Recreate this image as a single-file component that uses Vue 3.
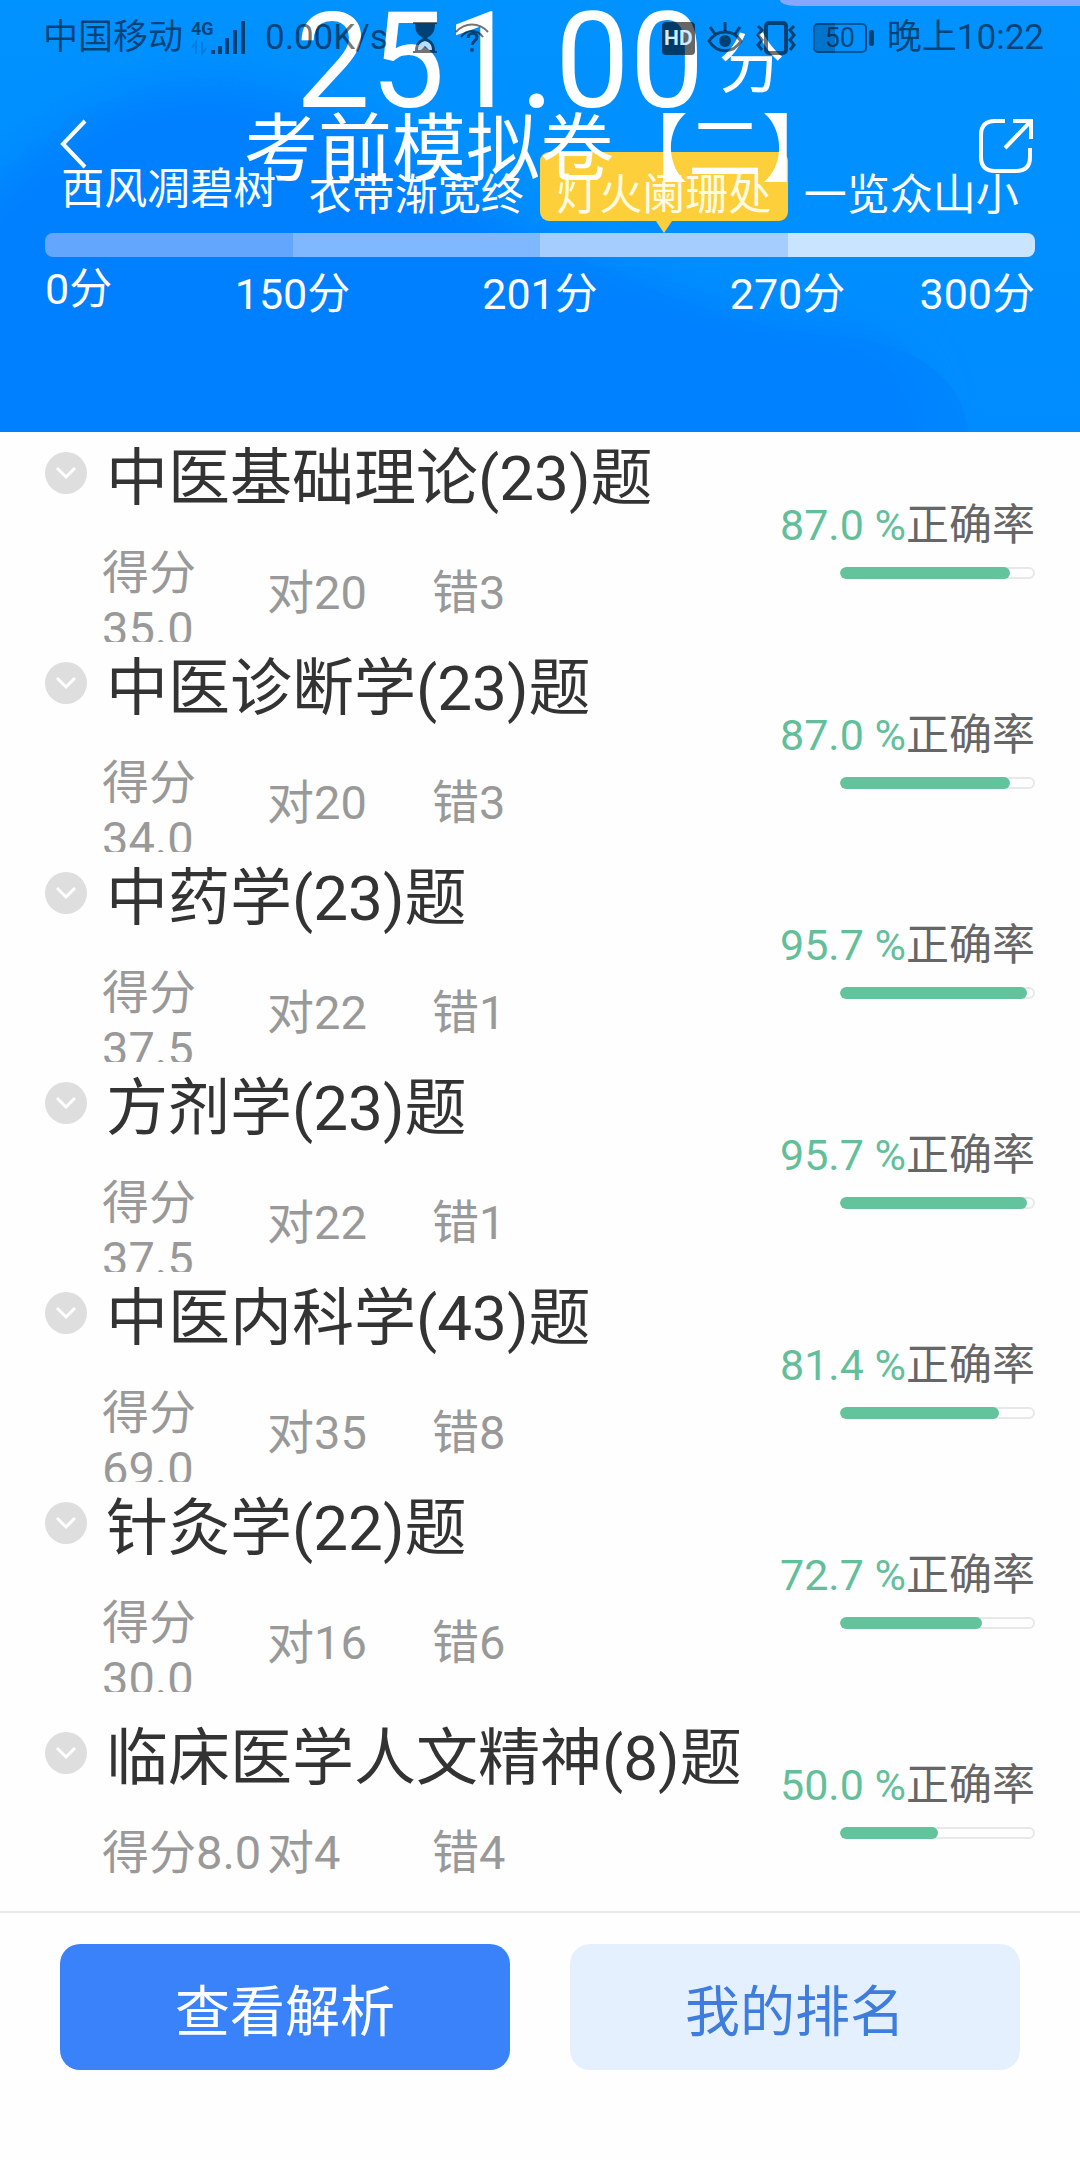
<script setup>
const levels = [
  { name: '西风凋碧树', color: '#62a7fd' },
  { name: '衣带渐宽终', color: '#80b8ff' },
  { name: '灯火阑珊处', color: '#a5ceff', active: true },
  { name: '一览众山小', color: '#c8e4ff' },
]
const ticks = ['0分', '150分', '201分', '270分', '300分']
const subjects = [
  { name: '中医基础理论', total: 23, score: '35.0', right: 20, wrong: 3, rate: '87.0' },
  { name: '中医诊断学', total: 23, score: '34.0', right: 20, wrong: 3, rate: '87.0' },
  { name: '中药学', total: 23, score: '37.5', right: 22, wrong: 1, rate: '95.7' },
  { name: '方剂学', total: 23, score: '37.5', right: 22, wrong: 1, rate: '95.7' },
  { name: '中医内科学', total: 43, score: '69.0', right: 35, wrong: 8, rate: '81.4' },
  { name: '针灸学', total: 22, score: '30.0', right: 16, wrong: 6, rate: '72.7' },
  { name: '临床医学人文精神', total: 8, score: '8.0', right: 4, wrong: 4, rate: '50.0' },
]
</script>

<template>
  <div class="page">
    <header class="hero">
      <svg class="hero-bg" viewBox="0 0 1080 432" preserveAspectRatio="none" aria-hidden="true">
        <defs>
          <linearGradient id="sky" x1="0" y1="0" x2="0" y2="1">
            <stop offset="0" stop-color="#0092ff" />
            <stop offset="1" stop-color="#008cff" />
          </linearGradient>
          <filter id="soft" x="-10%" y="-30%" width="120%" height="160%">
            <feGaussianBlur stdDeviation="24" />
          </filter>
        </defs>
        <rect width="1080" height="432" fill="url(#sky)" />
        <path d="M-60 240C20 160 90 90 190 84C340 78 420 180 560 250C680 300 760 330 850 336C900 340 930 380 930 500H-60Z" fill="#007fff" filter="url(#soft)" />
        <path d="M560 250C680 306 760 332 850 338C920 346 966 384 968 432H560Z" fill="#0082ff" opacity="0.6" />
      </svg>

      <div class="notice-edge"></div>

      <div class="status">
        <div class="status-side">
          <span>中国移动</span>
          <svg class="signal" width="56" height="36" viewBox="0 0 56 36">
            <text x="0" y="15" font-size="18" font-weight="700" font-family="Roboto, sans-serif">4G</text>
            <path d="M5 34V22l-4 6M11 22v12l4-6" fill="none" stroke="currentColor" stroke-width="2" opacity=".25" />
            <path d="M20 30h4v4h-4zM27 26h4v8h-4zM34 18h4v16h-4zM42 10h4v24h-4zM50 1h4v33h-4z" />
          </svg>
          <span class="speed">0.00K/s</span>
          <svg class="hourglass" width="24" height="34" viewBox="0 0 24 34">
            <path d="M0 1h24v2h-2c0 8-3 11-8 14 5 3 8 6 8 13h2v2H0v-2h2c0-7 3-10 8-13C5 14 2 11 2 3H0z" />
            <path d="M5 29c0-6 3-8 7-9 4 1 7 3 7 9h-3l-4-4-4 4z" fill="#b7dcff" />
          </svg>
          <svg class="wifi" width="34" height="32" viewBox="0 0 34 32">
            <path d="M1 10C10 0 24 0 33 10M6 15C9 11 12 9 17 9s8 2 11 6" fill="none" stroke="currentColor" stroke-width="2" />
            <path d="M13 16c0-6 9-6 9-1 0 4-5 4-5 8" fill="none" stroke="currentColor" stroke-width="3" />
            <circle cx="17" cy="28" r="2" />
          </svg>
        </div>
        <div class="status-side">
          <span class="hd">HD</span>
          <svg width="36" height="34" viewBox="0 0 36 34">
            <path d="M2 20C10 8 26 8 34 20 26 33 10 33 2 20Z" fill="none" stroke="currentColor" stroke-width="3" />
            <path d="M18 10V1M8 13L3 6M28 13l5-7" fill="none" stroke="currentColor" stroke-width="3" />
            <circle cx="18" cy="20" r="6" />
          </svg>
          <svg width="42" height="34" viewBox="0 0 42 34">
            <rect x="11" y="2" width="20" height="30" rx="3" fill="none" stroke="currentColor" stroke-width="4" />
            <path d="M3 5l4 4-4 5 4 5-4 5 4 5M39 5l-4 4 4 5-4 5 4 5-4 5" fill="none" stroke="currentColor" stroke-width="3" />
          </svg>
          <span class="battery">50</span>
          <span class="clock">晚上10:22</span>
        </div>
      </div>

      <p class="score"><span class="score-value">251.00</span><span class="score-unit">分</span></p>

      <nav class="nav">
        <button class="icon-button back" type="button" aria-label="返回">
          <svg width="28" height="52" viewBox="0 0 28 52" fill="none" stroke="#fff" stroke-width="4">
            <path d="M25 3L3 26l22 23" />
          </svg>
        </button>
        <h1>考前模拟卷【二】</h1>
        <button class="icon-button share" type="button" aria-label="分享">
          <svg width="56" height="56" viewBox="0 0 56 56" fill="none" stroke="#fff" stroke-width="4">
            <path d="M27 3H17Q3 3 3 17v22q0 14 14 14h21q14 0 14-14V30M35 3h18v18M53 3L27 30" />
          </svg>
        </button>
      </nav>

      <section class="scale">
        <div class="levels">
          <div v-for="l in levels" :key="l.name" class="level" :class="{ active: l.active }">{{ l.name }}</div>
        </div>
        <div class="bands">
          <div v-for="l in levels" :key="l.name" class="band" :style="{ background: l.color }"></div>
        </div>
        <div class="ticks">
          <span v-for="t in ticks" :key="t">{{ t }}</span>
        </div>
      </section>
    </header>

    <main class="subjects">
      <article v-for="s in subjects" :key="s.name" class="subject" :class="{ short: s.score.length < 4 }">
        <div class="info">
          <div class="heading">
            <button class="toggle" type="button" aria-label="展开">
              <svg width="20" height="14" viewBox="0 0 20 14" fill="none" stroke="#fff" stroke-width="3">
                <path d="M1 2l9 9 9-9" />
              </svg>
            </button>
            <h2>{{ s.name }}({{ s.total }})题</h2>
          </div>
          <div class="meta">
            <span class="points">得分{{ s.score }}</span>
            <span>对{{ s.right }}</span>
            <span>错{{ s.wrong }}</span>
          </div>
        </div>
        <div class="rate">
          <p><span class="percent">{{ s.rate }} %</span>正确率</p>
          <div class="track"><div class="fill" :style="{ width: s.rate + '%' }"></div></div>
        </div>
      </article>
    </main>

    <footer class="actions">
      <button class="primary" type="button">查看解析</button>
      <button class="secondary" type="button">我的排名</button>
    </footer>
  </div>
</template>

<style>
body {
  background: #fefefe;
}
</style>

<style scoped>
.page {
  font-family: Roboto, "Noto Sans CJK SC", sans-serif;
  font-weight: 400;
  color: #333;
}
h1, h2, p {
  margin: 0;
  font-weight: 400;
}
button {
  font-family: inherit;
  border: 0;
  padding: 0;
  background: none;
  cursor: pointer;
}
svg {
  display: block;
  flex: none;
}
.hero {
  position: relative;
  overflow: hidden;
  padding-bottom: 110px;
  color: #fff;
  background: #0090ff;
}
.hero-bg {
  position: absolute;
  inset: 0;
  width: 100%;
  height: 100%;
}
.notice-edge {
  position: absolute;
  top: 0;
  right: 0;
  width: 300px;
  height: 6px;
  border-bottom-left-radius: 16px 6px;
  background: #83a9ff;
}
.status {
  position: absolute;
  z-index: 2;
  top: 19px;
  left: 43px;
  right: 36px;
  height: 38px;
  display: flex;
  justify-content: space-between;
  font-size: 35px;
  line-height: 38px;
  color: rgba(0, 0, 0, 0.55);
  white-space: nowrap;
}
.status svg {
  fill: currentColor;
}
.status-side {
  display: flex;
  align-items: center;
  gap: 12px;
}
.signal {
  margin-left: -4px;
}
.speed {
  margin-left: 6px;
}
.hourglass {
  margin-left: 13px;
}
.wifi {
  margin-left: 6px;
}
.hd {
  width: 33px;
  height: 33px;
  border-radius: 4px;
  background: rgba(0, 0, 0, 0.6);
  color: #d5eaff;
  font-size: 21px;
  font-weight: 700;
  line-height: 33px;
  text-align: center;
}
.battery {
  position: relative;
  box-sizing: border-box;
  width: 54px;
  height: 30px;
  margin: 0 8px 0 4px;
  border: 2px solid rgba(0, 0, 0, 0.4);
  border-radius: 5px;
  background: linear-gradient(90deg, rgba(0, 0, 0, 0.2) 40%, transparent 40%);
  font-size: 27px;
  line-height: 26px;
  text-align: center;
}
.battery::after {
  content: "";
  position: absolute;
  top: 5px;
  right: -9px;
  width: 5px;
  height: 16px;
  border-radius: 2px;
  background: rgba(0, 0, 0, 0.55);
}
.score {
  position: relative;
  display: flex;
  justify-content: center;
  height: 110px;
  white-space: nowrap;
}
.score-value {
  font-size: 133px;
  line-height: 124px;
}
.score-unit {
  margin-left: 14px;
  font-size: 66px;
  line-height: 130px;
}
.nav {
  position: relative;
  z-index: 1;
  display: flex;
  align-items: center;
  justify-content: space-between;
  height: 72px;
  padding: 0 46px 0 60px;
}
.nav h1 {
  padding-top: 8px;
  font-size: 74px;
  line-height: 72px;
  white-space: nowrap;
}
.icon-button {
  display: flex;
  height: 56px;
}
.back {
  width: 56px;
}
.share {
  width: 70px;
  justify-content: flex-end;
}
.scale {
  position: relative;
  margin: -30px 45px 0;
}
.levels {
  display: grid;
  grid-template-columns: repeat(4, 1fr);
  margin-bottom: 12px;
  font-size: 43px;
}
.level {
  position: relative;
  height: 52px;
  padding-top: 17px;
  line-height: 52px;
  text-align: center;
  white-space: nowrap;
}
.level:first-child {
  padding-top: 11px;
}
.level.active {
  border-radius: 9px;
  background: #fdd03b;
  color: #fffbe0;
}
.level.active::after {
  content: "";
  position: absolute;
  top: 100%;
  left: 50%;
  margin-left: -8px;
  border: 8px solid transparent;
  border-top: 12px solid #fdd03b;
  border-bottom: 0;
}
.bands {
  display: flex;
  height: 24px;
  border-radius: 8px;
  overflow: hidden;
}
.band {
  flex: 1;
}
.ticks {
  display: grid;
  grid-template-columns: repeat(8, 1fr);
  margin-top: 9px;
  font-size: 43px;
  line-height: 56px;
  text-align: center;
  white-space: nowrap;
}
.ticks span {
  grid-column: span 2;
}
.ticks span:first-child {
  grid-column: span 1;
  line-height: 46px;
  text-align: left;
}
.ticks span:last-child {
  grid-column: span 1;
  text-align: right;
}
.subjects {
  padding: 0 45px 9px;
}
.subject {
  box-sizing: border-box;
  display: flex;
  justify-content: space-between;
  height: 210px;
  overflow: hidden;
}
.info {
  padding-top: 15px;
}
.heading {
  display: flex;
  gap: 19px;
}
.toggle {
  display: flex;
  align-items: center;
  justify-content: center;
  width: 42px;
  height: 42px;
  margin-top: 5px;
  border-radius: 50%;
  background: #dedede;
}
.heading h2 {
  font-size: 62px;
  line-height: 64px;
  white-space: nowrap;
}
.meta {
  display: grid;
  grid-template-columns: repeat(3, 165px);
  margin: 34px 0 0 57px;
  font-size: 47px;
  line-height: 56px;
  color: #999;
}
.meta span {
  padding-top: 20px;
}
.meta .points,
.short .meta span {
  padding-top: 0;
}
.short .info {
  padding-top: 35px;
}
.rate {
  display: flex;
  flex-direction: column;
  align-items: flex-end;
  gap: 16px;
  padding-top: 67px;
  font-size: 43px;
  line-height: 52px;
  color: #666;
  white-space: nowrap;
}
.percent {
  color: #62bf99;
}
.track {
  box-sizing: border-box;
  width: 195px;
  height: 12px;
  border-radius: 6px;
  box-shadow: inset 0 0 0 2px #e8e8e8;
  overflow: hidden;
}
.fill {
  height: 100%;
  border-radius: 6px;
  background: #62c39c;
}
.actions {
  display: grid;
  grid-template-columns: 1fr 1fr;
  gap: 60px;
  padding: 31px 60px 90px;
  border-top: 2px solid #e9e9e9;
}
.actions button {
  height: 126px;
  border-radius: 20px;
  font-size: 55px;
}
.primary {
  background: #3a82fa;
  color: #fff;
}
.secondary {
  background: #e5f0ff;
  color: #3f7ddc;
}
</style>
